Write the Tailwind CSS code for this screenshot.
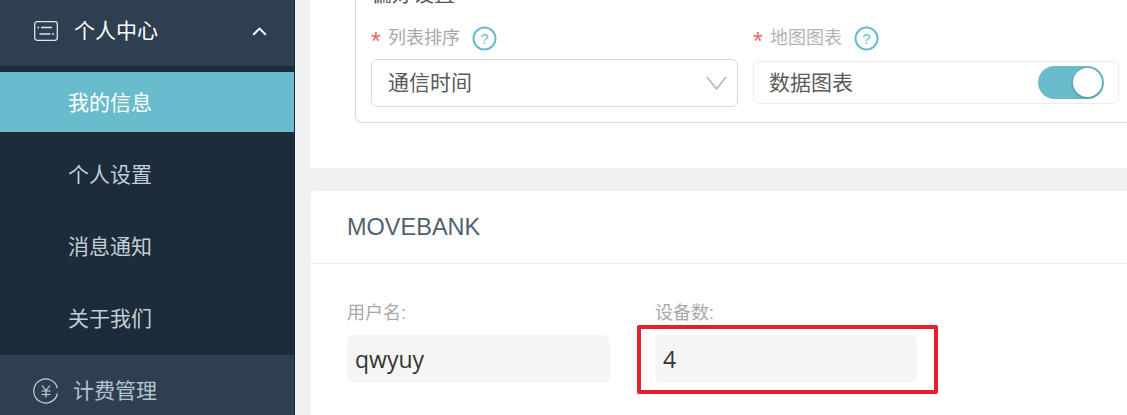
<!DOCTYPE html>
<html lang="zh-CN">
<head>
    <meta charset="UTF-8">
    <title>我的信息</title>
    <script src="https://cdn.jsdelivr.net/npm/@tailwindcss/browser@4"></script>
</head>
<body class="m-0 overflow-hidden bg-[#eff1f3] font-['Liberation_Sans','Noto_Sans_CJK_SC',sans-serif]">
    <div class="relative flex h-[415px] w-[1127px] overflow-hidden">

        <!-- sidebar -->
        <aside class="flex h-full w-[295px] shrink-0 flex-col border-r border-[#1a2a38] bg-[#1c2c3a] text-[21px]">
            <div class="flex h-[66px] shrink-0 items-center bg-[#2d3f50] pb-[4px] pl-[34px] pr-[27px] text-white">
                <svg class="h-[20px] w-[24px] shrink-0" viewBox="0 0 24 20" fill="none" stroke="#dfe6ea" stroke-width="1.3">
                    <rect x="0.7" y="0.7" width="22.6" height="18.6" rx="2.5"/>
                    <path d="M7 6.5h11M5.5 13h11"/>
                    <circle cx="4.3" cy="6.5" r="0.9" fill="#dfe6ea" stroke="none"/>
                    <circle cx="19" cy="13" r="0.9" fill="#dfe6ea" stroke="none"/>
                </svg>
                <span class="ml-[16px] flex-1">个人中心</span>
                <svg class="h-[9px] w-[15px]" viewBox="0 0 15 9" fill="none" stroke="#ffffff" stroke-width="2"><path d="M1.2 7.8 7.5 1.6l6.3 6.2"/></svg>
            </div>
            <div class="flex flex-col pt-[6px] text-[#c3ced5]">
                <div class="mb-[7px] flex h-[60px] items-center bg-[#69bccb] pl-[68px] pt-[1px] text-white">我的信息</div>
                <div class="flex h-[72px] items-center pl-[68px]">个人设置</div>
                <div class="flex h-[72px] items-center pl-[68px]">消息通知</div>
                <div class="flex h-[72px] items-center pl-[68px]">关于我们</div>
            </div>
            <div class="flex flex-1 items-center bg-[#2d3f50] pl-[33px] pt-[12px] text-[#b4c4cf]">
                <svg class="h-[26px] w-[26px] shrink-0" viewBox="0 0 26 26" fill="none" stroke="#c8d3da" stroke-width="1.2">
                    <path d="M24.5 15.5A12 12 0 1 1 24.4 10"/>
                    <path d="M9 7.5l4 5 4-5M8.5 13h9M8.5 16.5h9M13 12.5v7"/>
                </svg>
                <span class="ml-[14px]">计费管理</span>
            </div>
        </aside>

        <!-- main -->
        <main class="flex min-w-0 flex-1 flex-col pl-[15px]">
            <section class="-mt-[20px] h-[188px] w-[840px] shrink-0 bg-white pl-[45px]">
                <div class="h-[143px] w-[790px] rounded-b-[6px] border border-t-0 border-[#d9d9d9] pl-[15px]">
                    <div class="h-[20px] pt-[6px] text-[21px] leading-[16px] text-[#555]">偏好设置</div>
                    <div class="mt-[21px] flex gap-[15px]">
                        <div class="w-[367px]">
                            <div class="flex h-[34px] items-center text-[18px] text-[#a8a8a8]">
                                <span class="mr-[5px] w-[12px] pt-[6px] text-[25px] leading-[25px] text-[#dc6b6b]">*</span>列表排序
                                <svg class="ml-[12px] h-[25px] w-[25px]" viewBox="0 0 25 25" fill="none"><circle cx="12.5" cy="12.5" r="11" stroke="#69bccb" stroke-width="2"/><text x="12.5" y="18" text-anchor="middle" font-size="15" fill="#69bccb">?</text></svg>
                            </div>
                            <div class="mt-[4px] flex h-[48px] items-center justify-between rounded-[6px] border border-[#d9d9d9] pl-[16px] pr-[10px] text-[21px] text-[#5a5a5a]">
                                通信时间
                                <svg class="h-[14px] w-[21px]" viewBox="0 0 21 14" fill="none" stroke="#b5b5b5" stroke-width="1.6"><path d="M1 1l9.5 12L20 1"/></svg>
                            </div>
                        </div>
                        <div class="w-[366px]">
                            <div class="flex h-[34px] items-center text-[18px] text-[#b5b5b5]">
                                <span class="mr-[5px] w-[12px] pt-[6px] text-[25px] leading-[25px] text-[#dc6b6b]">*</span>地图图表
                                <svg class="ml-[12px] h-[25px] w-[25px]" viewBox="0 0 25 25" fill="none"><circle cx="12.5" cy="12.5" r="11" stroke="#69bccb" stroke-width="2"/><text x="12.5" y="18" text-anchor="middle" font-size="15" fill="#69bccb">?</text></svg>
                            </div>
                            <div class="mt-[6px] flex h-[43px] items-center justify-between rounded-[6px] border border-[#ececec] pl-[15px] pr-[14px] text-[21px] text-[#5a5a5a]">
                                数据图表
                                <div class="flex h-[33px] w-[66px] items-center justify-end rounded-full bg-[#69bccb] pr-[2px]">
                                    <div class="h-[29px] w-[29px] rounded-full bg-white shadow-[0_1px_3px_rgba(0,0,0,0.3)]"></div>
                                </div>
                            </div>
                        </div>
                    </div>
                </div>
            </section>

            <section class="ml-px mt-[23px] flex-1 rounded-tl-[4px] bg-white">
                <div class="flex h-[73px] items-center border-b border-[#eeeeee] pl-[36px] pt-[1px] text-[23.5px] text-[#52616f]">MOVEBANK</div>
                <div class="flex gap-[45px] pl-[36px] pt-[37px]">
                    <div class="w-[263px]">
                        <div class="text-[18px] leading-[24px] text-[#a8a8a8]">用户名:</div>
                        <div class="mt-[10px] flex h-[48px] items-center rounded-[6px] bg-[#f5f5f5] pl-[8px] pt-[1px] text-[23px] text-[#333] font-['Open_Sans']">qwyuy</div>
                    </div>
                    <div class="w-[262px]">
                        <div class="text-[18px] leading-[24px] text-[#a8a8a8]">设备数:</div>
                        <div class="mt-[10px] flex h-[48px] items-center rounded-[6px] bg-[#f5f5f5] pl-[8px] pt-[1px] text-[23px] text-[#333] font-['Open_Sans']">4</div>
                    </div>
                </div>
            </section>
        </main>

        <!-- annotation over the screenshot -->
        <div class="absolute left-[637px] top-[325px] h-[69px] w-[301px] rounded-[2px] border-[4px] border-[#e5202e]"></div>
    </div>
</body>
</html>
